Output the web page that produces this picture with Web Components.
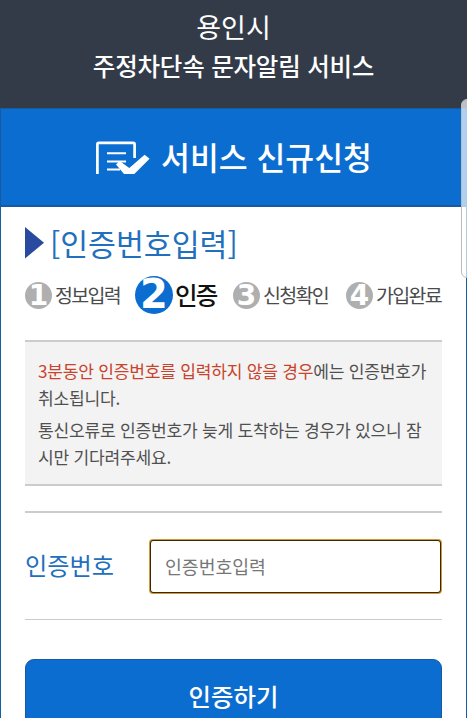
<!DOCTYPE html>
<html lang="ko">
<head>
<meta charset="utf-8">
<title>주정차단속 문자알림 서비스</title>
<style>
html,body{margin:0;height:718px;overflow:hidden;background:#fff}
body{font-family:"Noto Sans CJK KR","Noto Sans",sans-serif;color:#505050}
</style>
</head>
<body>
<alarm-app></alarm-app>
<script>
function define(name, html){
  customElements.define(name, class extends HTMLElement{
    constructor(){
      super();
      this.attachShadow({mode:'open'}).innerHTML = html;
    }
  });
}

define('site-header', `<style>
:host{display:flex;flex-direction:column;align-items:center;box-sizing:border-box;height:108px;padding-top:7px;background:#333b48;color:#fff;text-align:center;white-space:nowrap}
.city{font-size:27px;line-height:40px}
.name{font-size:24.5px;line-height:38px;font-weight:500;letter-spacing:-.2px}
</style><div class="city"><slot name="city"></slot></div><div class="name"><slot></slot></div>`);

define('title-bar', `<style>
:host{display:flex;box-sizing:border-box;height:99px;border:1px solid #185a9f;border-width:1px 1px 2px;background:#0c6dd0;color:#fff;padding:31px 0 0 95px;gap:11px;white-space:nowrap}
svg{display:block;width:54px;height:34px;flex:none}
.t{font-size:31.4px;line-height:34px;font-weight:500}
</style><svg viewBox="0 0 54 34"><g fill="none" stroke="#fff"><path d="M1.4 34V4.2Q1.4 2.9 2.8 2.9H37.2Q38.6 2.9 38.6 4.2V18" stroke-width="2.7"/><path d="M11 13.3H30M11 21.4H30M11 29.6H24" stroke-width="2"/></g><path d="M20 24.5 23.6 21 33.3 28 48.6 14.7 53.6 18.7 38.3 34H28Z" fill="#fff"/></svg><div class="t"><slot></slot></div>`);

define('section-title', `<style>
:host{display:flex;align-items:flex-start;height:46px;color:#216fbd;white-space:nowrap}
svg{display:block;width:19px;height:32px;margin:6px 6px 0 0}
.t{font-size:30.3px;line-height:44px}
</style><svg viewBox="0 0 19 32"><path d="M0 0 19 15.8 0 31.5Z" fill="#294b9f"/></svg><div class="t"><slot></slot></div>`);

define('step-item', `<style>
:host{display:flex;align-items:center;height:40px;white-space:nowrap;color:#4b4b4b}
.n{display:flex;justify-content:center;width:27px;height:27px;border-radius:50%;background:#afafaf;color:#fff;font:bold 28px/28px "DejaVu Sans",sans-serif}
.t{font-size:19.5px;letter-spacing:-1.7px;line-height:30px;margin-left:3px}
:host([active]){color:#111}
:host([active]) .n{width:38px;height:38px;background:#0c6dd0;font-size:40px;line-height:37px}
:host([active]) .t{font-size:24.5px;letter-spacing:-1.8px;font-weight:500;margin-left:2px}
</style><div class="n"><slot name="n"></slot></div><div class="t"><slot></slot></div>`);

define('step-list', `<style>
:host{display:grid;grid-template-columns:110px 98px 113px 1fr;height:40px}
</style><slot></slot>`);

define('notice-box', `<style>
:host{display:flex;flex-direction:column;gap:5px;box-sizing:border-box;height:146px;padding:15px 0 0 13px;border:solid #ccc;border-width:2px 0;background:#f3f3f3;font-size:17.1px;letter-spacing:-.24px;line-height:27px;white-space:nowrap}
::slotted(p){margin:0}
</style><slot></slot>`);

define('code-field', `<style>
:host{display:flex;align-items:center;box-sizing:border-box;height:109px;border:solid #ccc;border-width:2px 0 1px}
label{width:124px;font-size:24.2px;line-height:36px;margin-top:-2px;color:#216fbd;white-space:nowrap}
input{box-sizing:border-box;width:293px;height:55px;margin:0;padding:0 0 1px 14px;border:2px solid #d19a35;border-radius:4px;outline:1px solid #38270d;outline-offset:-2px;background:#fff;font:18.3px "Noto Sans CJK KR",sans-serif}
input::placeholder{color:#777;opacity:1}
</style><label for="c"><slot></slot></label><input id="c" placeholder="인증번호입력">`);

define('main-button', `<style>
:host{display:block}
button{display:flex;justify-content:center;align-items:flex-start;box-sizing:border-box;width:100%;height:76px;margin:0;padding:0;border:1px solid #185a9f;border-radius:9px;background:#0c6dd0;color:#fff;font:500 24.4px/72px "Noto Sans CJK KR",sans-serif}
</style><button><slot></slot></button>`);

define('scroll-thumb', `<style>
:host{position:absolute;left:461px;top:99px;box-sizing:border-box;width:12px;height:179px;border:1px solid #b9bdc3;border-radius:7px;background:rgba(255,255,255,.68)}
</style>`);

define('alarm-app', `<style>
:host{display:block;position:relative;width:467px;height:718px;overflow:hidden}
main{box-sizing:border-box;height:511px;padding:14px 24px 0;border:solid #145f9f;border-width:0 1px}
step-list{margin-top:8px}
notice-box{margin-top:25px}
code-field{margin-top:25px}
main-button{margin-top:39px}
.hot{color:#c8432c}
</style>
<site-header><span slot="city">용인시</span>주정차단속 문자알림 서비스</site-header>
<title-bar>서비스 신규신청</title-bar>
<main>
<section-title>[인증번호입력]</section-title>
<step-list>
<step-item><span slot="n">1</span>정보입력</step-item>
<step-item active><span slot="n">2</span>인증</step-item>
<step-item><span slot="n">3</span>신청확인</step-item>
<step-item><span slot="n">4</span>가입완료</step-item>
</step-list>
<notice-box>
<p><span class="hot">3분동안 인증번호를 입력하지 않을 경우</span>에는 인증번호가<br>취소됩니다.</p>
<p>통신오류로 인증번호가 늦게 도착하는 경우가 있으니 잠<br>시만 기다려주세요.</p>
</notice-box>
<code-field>인증번호</code-field>
<main-button>인증하기</main-button>
</main>
<scroll-thumb></scroll-thumb>`);
</script>
</body>
</html>
